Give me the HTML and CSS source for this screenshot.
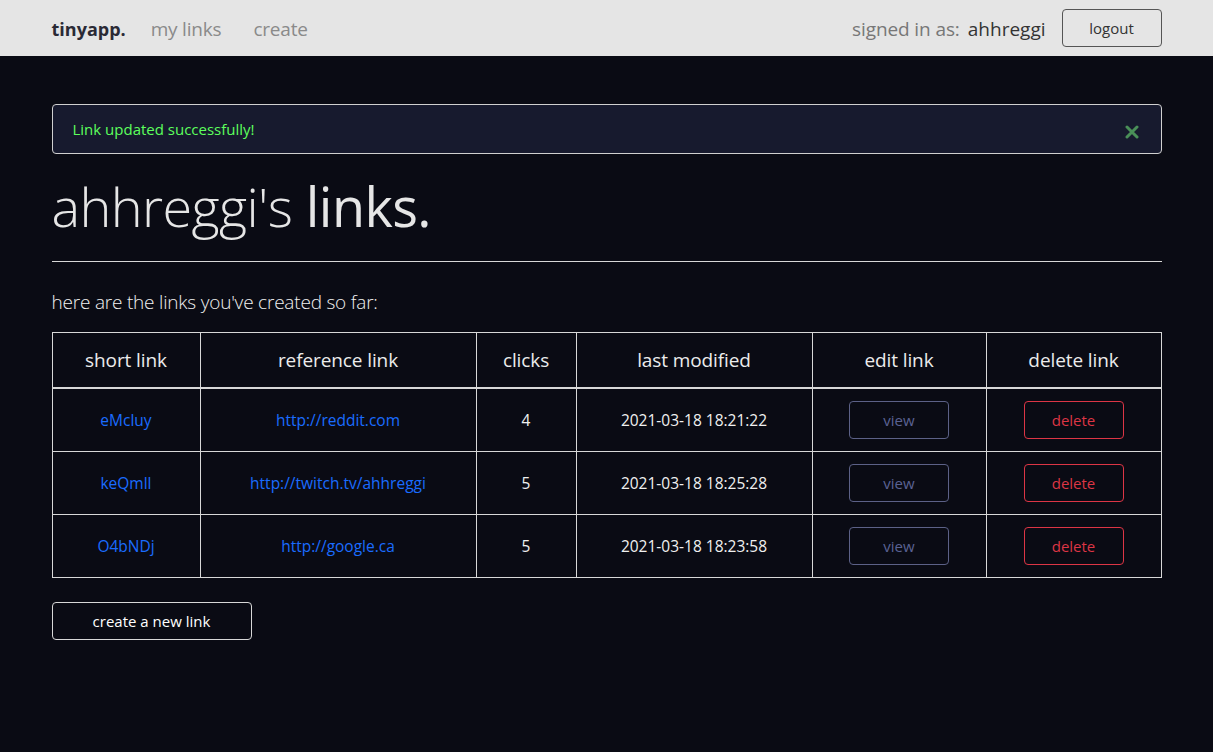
FILE: index.html
```html
<!DOCTYPE html>
<html lang="en">
<head>
<meta charset="utf-8">
<title>tinyapp</title>
<link rel="stylesheet" href="styles.css">
</head>
<body>
<nav class="navbar">
  <div class="nav-inner">
    <div class="nav-left">
      <a class="brand" href="#">tinyapp.</a>
      <a class="nav-link" href="#">my links</a>
      <a class="nav-link" href="#">create</a>
    </div>
    <div class="nav-right">
      <span class="signed">signed in as:</span>
      <span class="user">ahhreggi</span>
      <button class="btn-logout">logout</button>
    </div>
  </div>
</nav>
<main class="container">
  <div class="alert">
    <span>Link updated successfully!</span>
    <svg class="close" width="14" height="14" viewBox="0 0 14 14"><path d="M2 2 L12 12 M12 2 L2 12" stroke="#4a8f58" stroke-width="3" stroke-linecap="round"/></svg>
  </div>
  <h1 class="title">ahhreggi's <strong>links.</strong></h1>
  <hr class="rule">
  <p class="lead">here are the links you've created so far:</p>
  <table class="links">
    <colgroup>
      <col class="c1"><col class="c2"><col class="c3"><col class="c4"><col class="c5"><col class="c6">
    </colgroup>
    <thead>
      <tr><th>short link</th><th>reference link</th><th>clicks</th><th>last modified</th><th>edit link</th><th>delete link</th></tr>
    </thead>
    <tbody>
      <tr>
        <td><a href="#">eMcluy</a></td>
        <td><a href="#">http://reddit.com</a></td>
        <td>4</td>
        <td>2021-03-18 18:21:22</td>
        <td><button class="btn-view">view</button></td>
        <td><button class="btn-delete">delete</button></td>
      </tr>
      <tr>
        <td><a href="#">keQmll</a></td>
        <td><a href="#">http://twitch.tv/ahhreggi</a></td>
        <td>5</td>
        <td>2021-03-18 18:25:28</td>
        <td><button class="btn-view">view</button></td>
        <td><button class="btn-delete">delete</button></td>
      </tr>
      <tr>
        <td><a href="#">O4bNDj</a></td>
        <td><a href="#">http://google.ca</a></td>
        <td>5</td>
        <td>2021-03-18 18:23:58</td>
        <td><button class="btn-view">view</button></td>
        <td><button class="btn-delete">delete</button></td>
      </tr>
    </tbody>
  </table>
  <button class="btn-create">create a new link</button>
</main>
</body>
</html>
```

FILE: styles.css
```css
* { box-sizing: border-box; }
html, body { margin: 0; padding: 0; }
body {
  background: #0a0b14;
  color: #e6e6e6;
  font-family: "Open Sans", "Noto Sans", sans-serif;
  height: 752px;
}
a { text-decoration: none; }
.navbar {
  background: #e5e5e5;
  height: 56px;
}
.nav-inner {
  width: 1110px;
  margin: 0 auto;
  height: 56px;
  display: flex;
  align-items: center;
  justify-content: space-between;
}
.nav-left { display: flex; align-items: center; padding-top: 2px; }
.brand {
  font-weight: 700;
  font-size: 18px;
  color: #2a2a35;
  margin-right: 25px;
}
.nav-link {
  font-size: 19px;
  color: #8a8a8a;
  margin-right: 32px;
  letter-spacing: -0.2px;
}
.nav-right { display: flex; align-items: center; }
.signed { font-size: 19px; color: #777; margin-right: 8px; letter-spacing: -0.1px; padding-top: 2px; }
.user { font-size: 19px; color: #333; margin-right: 16px; padding-top: 2px; }
.btn-logout {
  width: 100px;
  height: 38px;
  border: 1px solid #555;
  border-radius: 4px;
  background: transparent;
  color: #333;
  font-family: inherit;
  font-size: 15px;
}
.container {
  width: 1110px;
  margin: 0 auto;
  padding-top: 48px;
}
.alert {
  height: 50px;
  background: #171a2e;
  border: 1px solid #d0d0d0;
  border-radius: 4px;
  display: flex;
  align-items: center;
  justify-content: space-between;
  padding: 0 22px 0 20px;
  color: #5dff5d;
  font-size: 15px;
}
.close { margin-top: 6px; }
.title {
  margin: 20px 0 0;
  font-size: 54px;
  font-weight: 300;
  line-height: 1.2;
  color: #e6e6e6;
  letter-spacing: -0.6px;
}
.title strong { font-weight: 400; }
.rule {
  margin: 22px 0 0;
  border: 0;
  border-top: 1px solid #d8d8d8;
}
.lead {
  margin: 27px 0 17px;
  font-size: 19px;
  font-weight: 300;
  color: #f0f0f0;
  letter-spacing: -0.2px;
}
.links {
  width: 1109px;
  table-layout: fixed;
  border-collapse: collapse;
}
.c1 { width: 148px; }
.c2 { width: 276px; }
.c3 { width: 100px; }
.c4 { width: 236px; }
.c5 { width: 174px; }
.c6 { width: 175px; }
.links th, .links td {
  border: 1px solid #d8d8d8;
  text-align: center;
  vertical-align: middle;
}
.links th {
  height: 56px;
  font-size: 19px;
  font-weight: 400;
  color: #ececec;
  border-bottom-width: 2px;
  letter-spacing: -0.1px;
}
.links td {
  height: 63px;
  font-size: 15.5px;
  color: #f0f0f0;
}
.links td a { color: #1a6cff; }
.btn-view, .btn-delete {
  width: 100px;
  height: 38px;
  border-radius: 4px;
  background: transparent;
  font-family: inherit;
  font-size: 15px;
}
.btn-view { border: 1px solid #5c6187; color: #5a6293; }
.btn-delete { border: 1px solid #dc3545; color: #dc3545; }
.btn-create {
  margin-top: 24px;
  width: 200px;
  height: 38px;
  border: 1px solid #d8d8d8;
  border-radius: 4px;
  background: transparent;
  color: #fff;
  font-family: inherit;
  font-size: 15px;
}
```
